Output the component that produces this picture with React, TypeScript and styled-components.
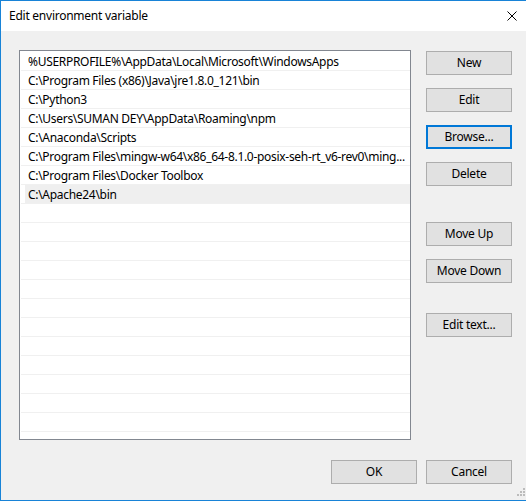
import styled, { createGlobalStyle } from 'styled-components';

const GlobalStyle = createGlobalStyle`
  html, body {
    margin: 0;
    padding: 0;
    background: #f0f0f0;
  }
  * {
    box-sizing: border-box;
  }
`;

const Dialog = styled.div`
  position: relative;
  width: 526px;
  height: 501px;
  display: flex;
  flex-direction: column;
  background: #f0f0f0;
  border-top: 1px solid #1883d7;
  border-left: 1px solid #1883d7;
  border-bottom: 1px solid #1883d7;
  font-family: "Noto Sans", "Open Sans", sans-serif;
  font-size: 12px;
  letter-spacing: -0.25px;
  color: #000;
`;

const TitleBar = styled.div`
  height: 30px;
  background: #fff;
  display: flex;
  align-items: center;
  justify-content: space-between;
  padding: 0 9px 1px 8px;
`;

const Title = styled.div`
  font-size: 12px;
`;

const CloseButton = styled.div`
  width: 10px;
  height: 10px;
  display: flex;
`;

const Body = styled.div`
  flex: 1;
  display: flex;
  flex-direction: column;
  padding: 19px 14px 0 18px;
`;

const MainRow = styled.div`
  display: flex;
  gap: 15px;
`;

const List = styled.div`
  width: 392px;
  height: 390px;
  background: #fff;
  border: 1px solid #828790;
  padding: 1px 0 0 1px;
  overflow: hidden;
`;

const Row = styled.div<{ $selected?: boolean }>`
  height: 19px;
  line-height: 19px;
  padding: 0 1px 0 7px;
  border-bottom: 1px solid #f0f0f0;
  letter-spacing: -0.3px;
  white-space: nowrap;
  overflow: hidden;
  text-overflow: ellipsis;
  background: ${({ $selected }) =>
    $selected ? 'linear-gradient(to right, transparent 4px, #efefef 4px)' : 'transparent'};
`;

const ButtonColumn = styled.div`
  display: flex;
  flex-direction: column;
  padding-top: 1px;
`;

const Button = styled.div<{ $focused?: boolean; $gap?: number }>`
  width: 86px;
  height: 24px;
  margin-top: ${({ $gap }) => $gap ?? 0}px;
  display: flex;
  align-items: center;
  justify-content: center;
  background: #e1e1e1;
  border: ${({ $focused }) => ($focused ? '2px solid #0078d7' : '1px solid #adadad')};
  padding-bottom: 1px;
`;

const Footer = styled.div`
  display: flex;
  justify-content: flex-end;
  gap: 9px;
  margin-top: 20px;
`;

const Grip = styled.svg`
  position: absolute;
  right: 1px;
  bottom: 2px;
`;

const paths = [
  '%USERPROFILE%\\AppData\\Local\\Microsoft\\WindowsApps',
  'C:\\Program Files (x86)\\Java\\jre1.8.0_121\\bin',
  'C:\\Python3',
  'C:\\Users\\SUMAN DEY\\AppData\\Roaming\\npm',
  'C:\\Anaconda\\Scripts',
  'C:\\Program Files\\mingw-w64\\x86_64-8.1.0-posix-seh-rt_v6-rev0\\ming...',
  'C:\\Program Files\\Docker Toolbox',
  'C:\\Apache24\\bin',
];

const rows = [...paths, ...Array(12).fill('')];

const sideButtons = [
  { label: 'New', gap: 0 },
  { label: 'Edit', gap: 13 },
  { label: 'Browse...', gap: 13, focused: true },
  { label: 'Delete', gap: 13 },
  { label: 'Move Up', gap: 36 },
  { label: 'Move Down', gap: 13 },
  { label: 'Edit text...', gap: 30 },
];

const App = () => {
  return (
    <>
      <GlobalStyle />
      <Dialog>
        <TitleBar>
          <Title>Edit environment variable</Title>
          <CloseButton>
            <svg width="10" height="10" viewBox="0 0 10 10">
              <path d="M0.5 0.5L9.5 9.5M9.5 0.5L0.5 9.5" stroke="#000" strokeWidth="1" />
            </svg>
          </CloseButton>
        </TitleBar>
        <Body>
          <MainRow>
            <List>
              {rows.map((p, i) => (
                <Row key={i} $selected={i === 7}>
                  {p}
                </Row>
              ))}
            </List>
            <ButtonColumn>
              {sideButtons.map((b) => (
                <Button key={b.label} $gap={b.gap} $focused={b.focused}>
                  {b.label}
                </Button>
              ))}
            </ButtonColumn>
          </MainRow>
          <Footer>
            <Button>OK</Button>
            <Button>Cancel</Button>
          </Footer>
        </Body>
        <Grip width="10" height="10" viewBox="0 0 10 10">
          {[
            [8, 0],
            [5, 3],
            [8, 3],
            [2, 6],
            [5, 6],
            [8, 6],
          ].map(([x, y]) => (
            <rect key={`${x}-${y}`} x={x} y={y} width="2" height="2" fill="#bcbcbc" />
          ))}
        </Grip>
      </Dialog>
    </>
  );
};

export default App;
